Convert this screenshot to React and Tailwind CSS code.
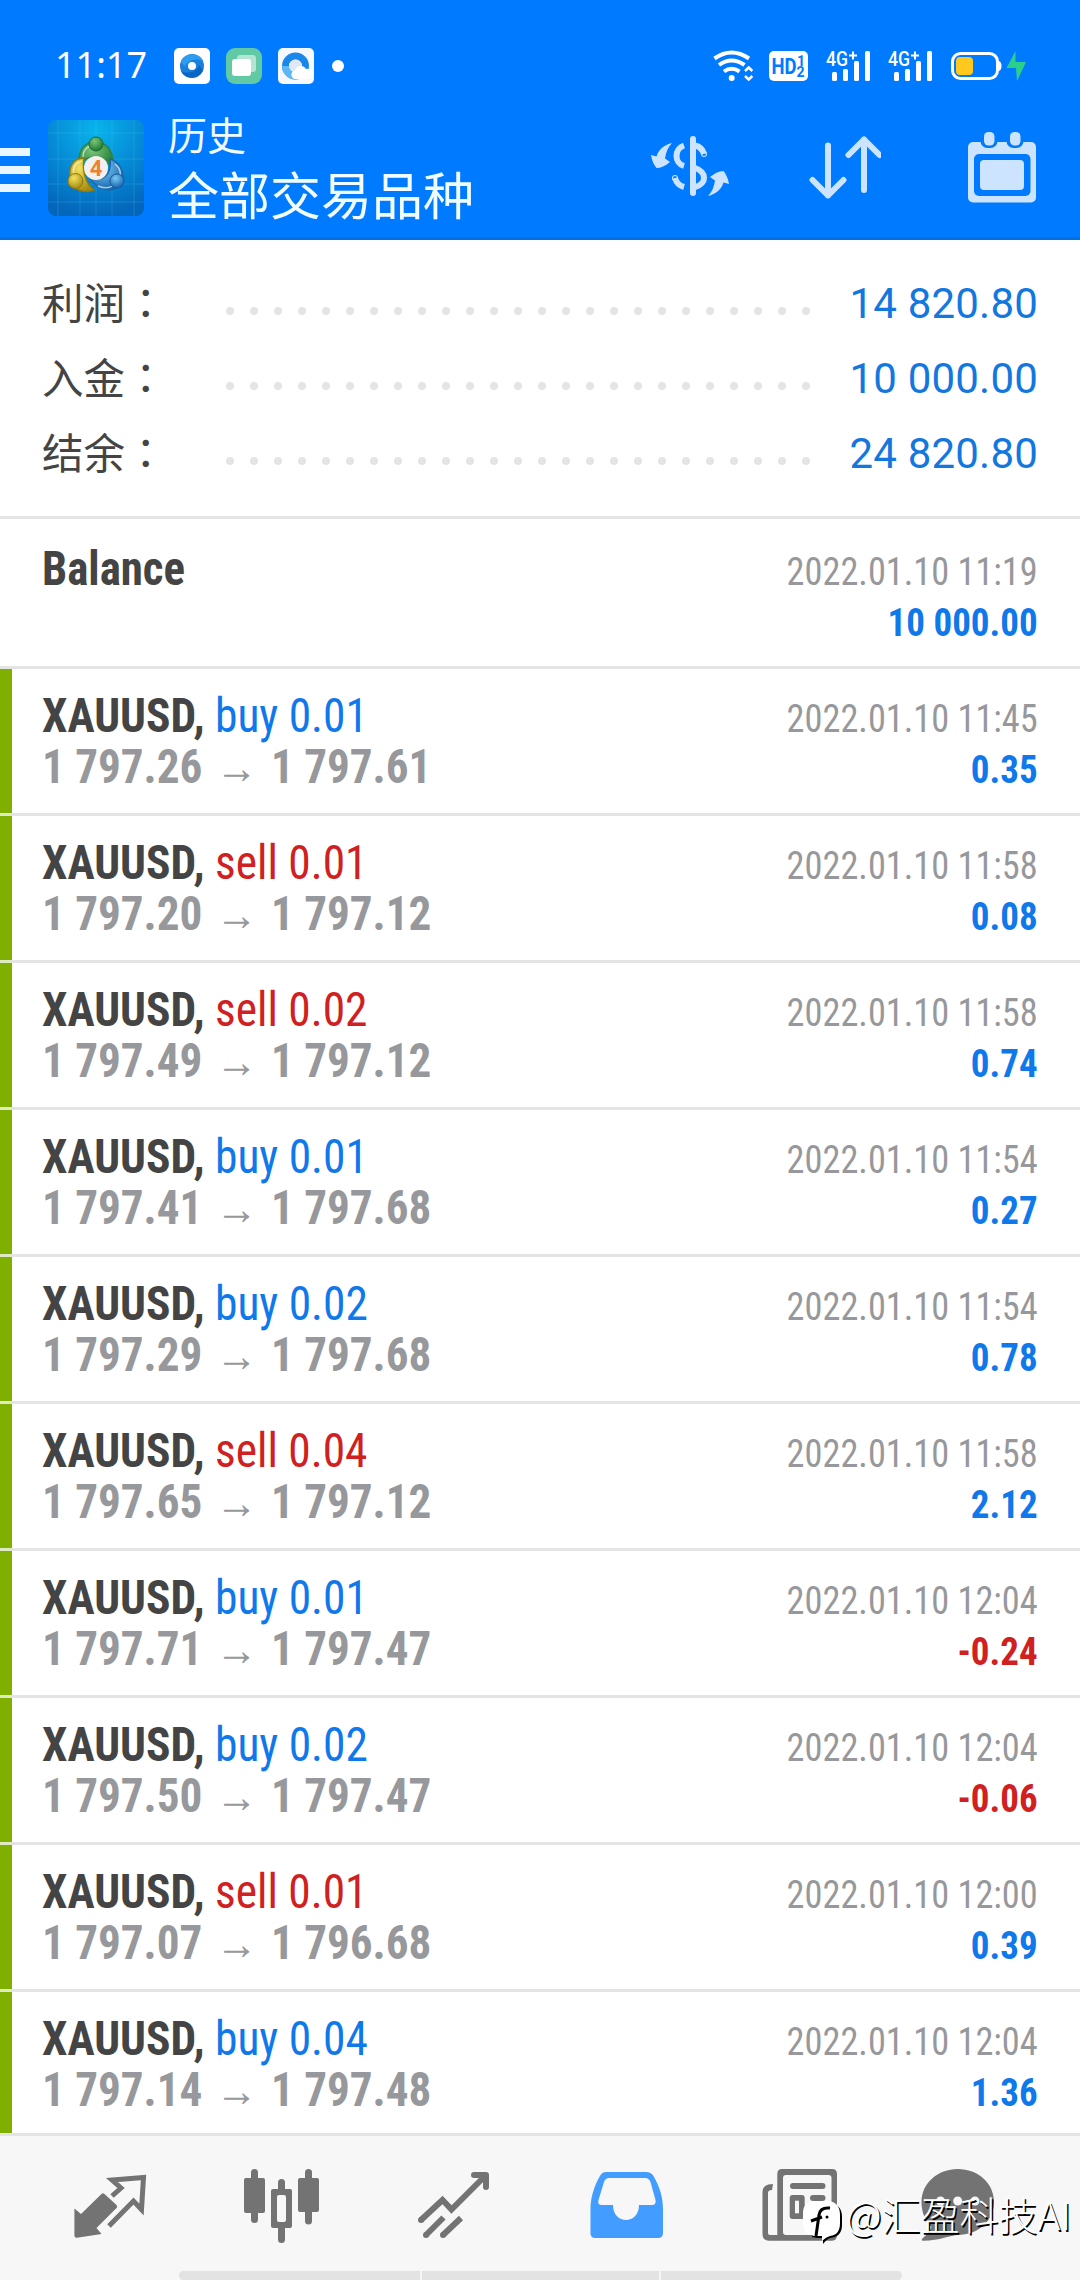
const summary = [
    { label: '利润', value: '14 820.80' },
    { label: '入金', value: '10 000.00' },
    { label: '结余', value: '24 820.80' },
]

const trades = [
    { side: 'buy', volume: '0.01', open: '1 797.26', close: '1 797.61', time: '2022.01.10 11:45', profit: '0.35' },
    { side: 'sell', volume: '0.01', open: '1 797.20', close: '1 797.12', time: '2022.01.10 11:58', profit: '0.08' },
    { side: 'sell', volume: '0.02', open: '1 797.49', close: '1 797.12', time: '2022.01.10 11:58', profit: '0.74' },
    { side: 'buy', volume: '0.01', open: '1 797.41', close: '1 797.68', time: '2022.01.10 11:54', profit: '0.27' },
    { side: 'buy', volume: '0.02', open: '1 797.29', close: '1 797.68', time: '2022.01.10 11:54', profit: '0.78' },
    { side: 'sell', volume: '0.04', open: '1 797.65', close: '1 797.12', time: '2022.01.10 11:58', profit: '2.12' },
    { side: 'buy', volume: '0.01', open: '1 797.71', close: '1 797.47', time: '2022.01.10 12:04', profit: '-0.24' },
    { side: 'buy', volume: '0.02', open: '1 797.50', close: '1 797.47', time: '2022.01.10 12:04', profit: '-0.06' },
    { side: 'sell', volume: '0.01', open: '1 797.07', close: '1 796.68', time: '2022.01.10 12:00', profit: '0.39' },
    { side: 'buy', volume: '0.04', open: '1 797.14', close: '1 797.48', time: '2022.01.10 12:04', profit: '1.36' },
]

function Signal() {
    return (
        <svg width="45" height="39" viewBox="0 -6 45 39" fill="#fff">
            <text x="0" y="16" fontSize="20" textLength="22" lengthAdjust="spacingAndGlyphs" className="font-['Roboto'] font-medium">4G</text>
            <path d="M23 5.500h8M27 1.500v8" stroke="#fff" strokeWidth="2" />
            <rect x="6" y="22" width="5" height="9" rx="1.500" />
            <rect x="17" y="19" width="5" height="12" rx="1.500" />
            <rect x="28" y="11" width="5" height="20" rx="1.500" />
            <rect x="39" y="1" width="5" height="30" rx="1.500" />
        </svg>
    )
}

function StatusBar() {
    return (
        <div className="flex h-[112px] items-start pt-[48px] pl-[55px]">
            <span className="-mt-px w-[119px] font-['Noto_Sans'] text-[36px] leading-[36px] text-white">11:17</span>
            <svg width="36" height="36" viewBox="0 0 36 36">
                <rect width="36" height="36" rx="5" fill="#fff" />
                <circle cx="18" cy="18" r="12" fill="#1a80dc" />
                <path d="M7 14C11 4 25 4 29 13C22 9 12 13 11 19Z" fill="#2e9cf0" />
                <path d="M29 22C25 32 11 32 7 23C14 27 24 23 25 17Z" fill="#0a66c4" />
                <circle cx="18" cy="18" r="4" fill="#fff" />
            </svg>
            <svg className="ml-4" width="36" height="36" viewBox="0 0 36 36">
                <rect width="36" height="36" rx="9" fill="#62c9a5" />
                <rect x="11" y="7" width="19" height="17" rx="3" fill="#b4e4d2" />
                <rect x="6" y="11" width="19" height="17" rx="3" fill="#fff" />
            </svg>
            <svg className="ml-4" width="36" height="36" viewBox="0 0 36 36">
                <rect width="36" height="36" rx="5" fill="#f5f8fc" />
                <circle cx="17.500" cy="18" r="10" fill="none" stroke="#1a88ea" strokeWidth="7" />
                <path d="M7.500 18A10 10 0 0 0 17.500 28" fill="none" stroke="#5cb8f5" strokeWidth="7" />
                <circle cx="17.500" cy="18" r="6.500" fill="#dfe8f4" />
                <path d="M16 31a4.500 4.500 0 0 1 1-8.500a6 6 0 0 1 11-1.500a5 5 0 0 1 3 10z" fill="#fff" />
            </svg>
            <span className="mt-3 ml-[18px] size-3 rounded-full bg-white" />

            <svg className="ml-[369px]" width="40" height="36" viewBox="713 48 40 36" fill="none" stroke="#fff" strokeWidth="4">
                <path d="M714.500 58.500Q731.500 46.500 749 58.500" />
                <path d="M719 65Q731.500 56 744.500 65" />
                <path d="M724 71.500Q731.500 66 739.500 71.500" />
                <circle cx="731.700" cy="78" r="3" fill="#fff" stroke="none" />
                <path d="M745 71l3.700-3.500l3.700 3.500M745 76l3.700 3.500l3.700-3.500" strokeWidth="2.500" />
            </svg>
            <svg className="ml-4" width="39" height="36" viewBox="769 48 39 36">
                <rect x="769" y="51" width="39" height="30" rx="5" fill="#fff" />
                <g fill="#007aff" className="font-['Roboto'] font-bold">
                    <text x="771.500" y="74" fontSize="22" textLength="25" lengthAdjust="spacingAndGlyphs">HD</text>
                    <text x="797" y="65.500" fontSize="14">1</text>
                    <text x="796.500" y="77" fontSize="14">2</text>
                </g>
            </svg>
            <div className="-mt-1 ml-[18px] flex gap-[17px]">
                <Signal />
                <Signal />
            </div>
            <svg className="ml-[17px]" width="78" height="36" viewBox="950 48 78 36">
                <rect x="952.500" y="53.500" width="45" height="25" rx="8" fill="none" stroke="#fff" strokeWidth="3" />
                <path d="M999 61q2.500 1 2.500 5t-2.500 5z" fill="#fff" />
                <rect x="956" y="57" width="17" height="18" rx="4" fill="#ffc81e" />
                <path d="M1015.500 51L1006.500 68H1016L1017 81L1026 62H1015.500Z" fill="#2bcf8c" />
            </svg>
        </div>
    )
}

function AppLogo() {
    return (
        <svg className="ml-[18px]" width="96" height="96" viewBox="0 0 96 96">
            <defs>
                <radialGradient id="tile" cx="0.5" cy="0.1" r="0.9">
                    <stop offset="0" stopColor="#08b4ec" />
                    <stop offset="0.6" stopColor="#0585d2" />
                    <stop offset="1" stopColor="#0466ba" />
                </radialGradient>
                <radialGradient id="green" cx="0.4" cy="0.3" r="0.7">
                    <stop offset="0" stopColor="#7cc47a" />
                    <stop offset="1" stopColor="#1f7a34" />
                </radialGradient>
                <radialGradient id="yellow" cx="0.4" cy="0.3" r="0.7">
                    <stop offset="0" stopColor="#f3e25c" />
                    <stop offset="1" stopColor="#a88c12" />
                </radialGradient>
                <radialGradient id="blue" cx="0.4" cy="0.3" r="0.7">
                    <stop offset="0" stopColor="#7cc8f5" />
                    <stop offset="1" stopColor="#1666ae" />
                </radialGradient>
            </defs>
            <rect width="96" height="96" rx="8" fill="url(#tile)" />
            <path d="M10 0V96M32 0V96M48 0V96M64 0V96M86 0V96M0 13H96M0 39H96M0 64H96M0 82H96" stroke="#5cc8f5" strokeOpacity="0.22" />
            <path d="M31 44C30 28 38 22 48 22C59 22 67 32 65 50C62 44 58 38 48 37C40 37 34 40 31 44Z" fill="url(#green)" stroke="#2c8440" strokeWidth="1.500" />
            <path d="M36 38C24 38 20 48 22 62C28 72 38 73 46 70C38 64 34 52 36 38Z" fill="url(#yellow)" stroke="#8f7a10" strokeWidth="1.500" />
            <path d="M62 39C72 42 77 52 74 62C68 74 50 72 42 58C54 62 64 56 62 39Z" fill="url(#blue)" stroke="#1a68ac" strokeWidth="1.500" />
            <path d="M35 37C35 29 41 25 47 25M26 56C24 48 27 43 34 41M67 44C72 48 73 53 72 57M50 66C57 69 62 68 66 65" fill="none" stroke="#fff" strokeOpacity="0.6" strokeWidth="1.500" />
            <circle cx="48" cy="24" r="7" fill="url(#green)" stroke="#196b2b" />
            <circle cx="27.500" cy="61" r="7.500" fill="url(#yellow)" stroke="#8f7a10" />
            <circle cx="69" cy="61" r="7" fill="url(#blue)" stroke="#145a9c" />
            <circle cx="48" cy="48" r="12" fill="#f3f1ef" />
            <text x="48" y="56" textAnchor="middle" fontSize="22" fill="#ee8130" className="font-['Roboto'] font-bold">4</text>
        </svg>
    )
}

function AppBar() {
    return (
        <div className="flex h-[128px] items-start pt-2">
            <div className="mt-7 flex w-[30px] flex-col gap-2.5">
                <span className="h-2 bg-[#e9f6ff]" />
                <span className="h-2 bg-[#e9f6ff]" />
                <span className="h-2 bg-[#e9f6ff]" />
            </div>
            <AppLogo />
            <div className="-mt-[11px] ml-6 flex w-[482px] flex-col font-['Noto_Sans_CJK_SC',sans-serif] text-[#f0fcff]">
                <span className="text-[39px] leading-[48px]">历史</span>
                <span className="text-[51px] leading-[72px]">全部交易品种</span>
            </div>
            <svg className="mt-3.5" width="80" height="64" viewBox="650 134 80 64" fill="#cce4ff">
                <path d="M672 143C664 145 659 149 656.500 156.500L651 155C652 161 654 165 656.500 168C661 168 665 166 670 162L665 158.500C666 152 668 147 672 143Z" />
                <path d="M708 196C716 194 721 190 723.500 182.500L729 184C728 178 726 174 723.500 171C719 171 715 173 710 177L715 180.500C714 187 712 192 708 196Z" />
                <g fill="none" stroke="#cce4ff" strokeWidth="6">
                    <path d="M693 139V193" strokeLinecap="round" />
                    <path d="M684 145.500C674 149 674 163 684 166" />
                    <path d="M675 178Q677 185 684 187" />
                    <circle cx="675" cy="178" r="0.500" strokeWidth="5" />
                    <path d="M695 145.500Q702 147 704 154" />
                    <circle cx="704" cy="154" r="0.500" strokeWidth="5" />
                    <path d="M695 168C707 172 707 184 695 187" />
                </g>
            </svg>
            <svg className="mt-3.5 ml-[79px]" width="72" height="66" viewBox="809 134 72 66" fill="none" stroke="#cce4ff" strokeWidth="6" strokeLinecap="round" strokeLinejoin="round">
                <path d="M828 145.500V195.500M812.500 180L828 195.500L843.500 180" />
                <path d="M864 190V139.500M848.500 155L864 139.500L879.500 155" />
            </svg>
            <svg className="mt-2.5 ml-[85px]" width="72" height="74" viewBox="966 130 72 74">
                <rect x="968" y="142" width="68" height="60.500" rx="5" fill="#cce4ff" />
                <rect x="980.500" y="126" width="17" height="22" rx="7" fill="#007aff" />
                <rect x="1006.500" y="126" width="17" height="22" rx="7" fill="#007aff" />
                <rect x="984" y="132" width="10.500" height="13.500" rx="4.500" fill="#cce4ff" />
                <rect x="1010" y="132" width="10.500" height="13.500" rx="4.500" fill="#cce4ff" />
                <rect x="974" y="154" width="56.500" height="42" rx="5" fill="#007aff" />
                <rect x="980" y="160" width="44" height="30" rx="4" fill="#cce4ff" />
            </svg>
        </div>
    )
}

function SummaryRow({ label, value }) {
    return (
        <div className="flex h-[75px] items-center">
            <span className="-mt-[5px] w-[184px] font-['Noto_Sans_CJK_SC',sans-serif] text-[41.500px] leading-[60px] text-[#444]">
                {label}
                <span className="font-['Noto_Sans_CJK_TC',sans-serif]">：</span>
            </span>
            <div className="mt-3.5 flex w-[584px] justify-between">
                {Array.from({ length: 25 }, (_, i) => (
                    <span key={i} className="size-2 rounded-full bg-[#e4e4e4]" />
                ))}
            </div>
            <span className="flex-1 text-right text-[42px] leading-[60px] tracking-[0.2px] text-[#1377e0]">{value}</span>
        </div>
    )
}

function TradeRow({ trade }) {
    const sideColor = trade.side === 'buy' ? 'text-[#0f78ea]' : 'text-[#d0201f]'
    const profitColor = trade.profit.startsWith('-') ? 'text-[#d0201f]' : 'text-[#0f78ea]'

    return (
        <div className="flex h-[147px] shrink-0 font-stretch-75%">
            <div className="w-3 border-b-[3px] border-[#dfe9c3] bg-[#7fb000]" />
            <div className="flex flex-1 justify-between border-b-[3px] border-[#e4e4e4] pr-[42px] pl-[30px]">
                <div className="pt-[21px] text-[48px] leading-[51px] whitespace-pre">
                    <p className="origin-left scale-x-[0.946]">
                        <span className="font-bold text-[#444]">XAUUSD,</span>
                        <span className={sideColor}> {trade.side} {trade.volume}</span>
                    </p>
                    <p className="origin-left scale-x-[0.94] font-bold text-[#97989b]">
                        {trade.open}
                        <span className="inline-block w-[73px] text-center font-['Liberation_Sans'] text-[45px] leading-[40px] font-normal">→</span>
                        {trade.close}
                    </p>
                </div>
                <div className="pt-[25px] text-right text-[39px] leading-[51px]">
                    <p className="origin-right scale-x-[0.931] text-[#97989b]">{trade.time}</p>
                    <p className={`origin-right scale-x-[0.948] font-bold ${profitColor}`}>{trade.profit}</p>
                </div>
            </div>
        </div>
    )
}

function BottomNav() {
    return (
        <nav className="relative flex h-[147px] shrink-0 flex-col justify-between border-t-[3px] border-[#e4e4e4] bg-[#f7f7f7]">
            <svg width="1080" height="112" viewBox="0 0 1080 112" fill="#737373">
                <path d="M112 60L121 52L112 44L143.500 41.500L141.500 73.500L133.500 65L109 90" fill="none" stroke="#737373" strokeWidth="5" />
                <path d="M101.500 58Q103 56.500 104.500 58L116.500 69Q118 70.500 116.500 72L96.500 92L101.500 98L77 101.700Q74.400 102 74.400 99V72.500L81 78Z" />

                <rect x="244" y="42" width="21" height="35" rx="2" />
                <rect x="251" y="33" width="7" height="54" rx="3.500" />
                <rect x="298" y="42" width="21" height="34" rx="2" />
                <rect x="305" y="33" width="7" height="55.500" rx="3.500" />
                <rect x="278" y="43" width="7" height="64" rx="3.500" />
                <rect x="271" y="53" width="21" height="39" rx="2" />
                <rect x="277" y="59" width="9" height="27" rx="2" fill="#f7f7f7" />

                <g fill="none" stroke="#737373" strokeWidth="6">
                    <path d="M421 84L442.500 64L451.500 73.500L485 40" />
                    <path d="M474 39H486V51" strokeLinecap="round" strokeLinejoin="round" />
                    <path d="M426 99L443.500 81.500M443 99L461 82" />
                    <path d="M421 84h.1M426 99h.1M443 99h.1" strokeLinecap="round" />
                </g>

                <path d="M605 36H646Q651 36 653.500 40C660 51 663 62 663 73V97Q663 102 658 102H595Q590.500 102 590.500 97V73C590.500 62 594 50 600 40Q602 36 606 36Z" fill="#439cff" />
                <path d="M609 42H645Q649 42 650.500 46L655.500 64Q656.500 69 652 69H639C639 89 613 89 613 69H602Q597 69 598.500 64L604 46Q605.500 42 609 42Z" fill="#f7f7f7" />

                <path d="M773 48Q762.500 48 762.500 56V98Q762.500 104.700 769 104.700H832Q837 104.700 837 99V38Q837 33 832 33H782Q777.300 33 777.300 38V99H770Q768 99 768 97V57Q768 54 772 54Z" />
                <rect x="783" y="39" width="48.500" height="60" rx="3" fill="#f7f7f7" />
                <rect x="790" y="47" width="35.500" height="6" rx="3" />
                <rect x="789.700" y="59" width="15" height="24" rx="3" />
                <rect x="795" y="64.700" width="4" height="12.600" fill="#f7f7f7" />
                <rect x="810" y="59" width="15.500" height="6" rx="3" />
                <rect x="810" y="71" width="15.500" height="6" rx="3" />

                <path d="M957.700 33C978 33 994 47 994 66C994 85 978 99 957.700 99C951 99 940 104.700 923 104.700Q920 104.500 924 101Q930 96 931.500 91C925 85 921.500 76 921.500 66C921.500 47 938 33 957.700 33Z" />
                <circle cx="940.500" cy="65" r="4.500" fill="#f7f7f7" />
                <circle cx="957.700" cy="65" r="4.500" fill="#f7f7f7" />
                <circle cx="975" cy="65" r="4.500" fill="#f7f7f7" />
            </svg>
            <div className="mx-auto flex h-[9px] w-[723px] gap-0.5 overflow-hidden rounded-[5px]">
                <span className="flex-1 bg-[#e3e3e3]" />
                <span className="w-[237px] bg-[#e3e3e3]" />
                <span className="flex-1 bg-[#e3e3e3]" />
            </div>

            <div className="absolute top-[52px] right-[9px] flex items-start">
                <svg className="mt-[11px] mr-[2px]" width="42" height="48" viewBox="0 0 42 48">
                    <path d="M14 4H27Q40 5 40 18V26Q40 38 28 39Q25 40 21 45V39H15L10 38Z" fill="#000" />
                    <path d="M12 2H26Q38 3 38 16V24Q38 36 28 37Q24 38 20 42V37H12Q1 35 1 24V14Q1 3 12 2Z" fill="#fff" />
                    <path d="M28 9Q18 8 17 16L14 37M9 22L20 18" fill="none" stroke="#000" strokeWidth="3" />
                    <circle cx="25" cy="18" r="1.500" fill="#000" />
                </svg>
                <span className="font-['Noto_Sans_CJK_SC',sans-serif] text-[39px] leading-[50px] font-light text-white [text-shadow:1.5px_1.5px_0.5px_#000]">@汇盈科技AI</span>
            </div>
        </nav>
    )
}

function App() {
    return (
        <div className="flex h-[2280px] w-[1080px] flex-col overflow-hidden bg-white font-['Roboto',sans-serif]">
            <header className="h-[240px] shrink-0 border-b-[3px] border-[#006fe2] bg-[#007aff]">
                <StatusBar />
                <AppBar />
            </header>

            <section className="h-[279px] shrink-0 border-b-[3px] border-[#e4e4e4] px-[42px] pt-[26px]">
                {summary.map((row) => (
                    <SummaryRow key={row.label} label={row.label} value={row.value} />
                ))}
            </section>

            <main className="flex min-h-0 flex-1 flex-col overflow-hidden">
                <div className="flex h-[150px] shrink-0 justify-between border-b-[3px] border-[#e4e4e4] px-[42px] font-stretch-75%">
                    <p className="origin-left scale-x-[0.935] pt-6 text-[48px] leading-[51px] font-bold text-[#444]">Balance</p>
                    <div className="pt-[28px] text-right text-[39px] leading-[51px]">
                        <p className="origin-right scale-x-[0.931] text-[#97989b]">2022.01.10 11:19</p>
                        <p className="origin-right scale-x-[0.948] font-bold text-[#0f78ea]">10 000.00</p>
                    </div>
                </div>
                {trades.map((trade, index) => (
                    <TradeRow key={index} trade={trade} />
                ))}
            </main>

            <BottomNav />
        </div>
    )
}

export default App
